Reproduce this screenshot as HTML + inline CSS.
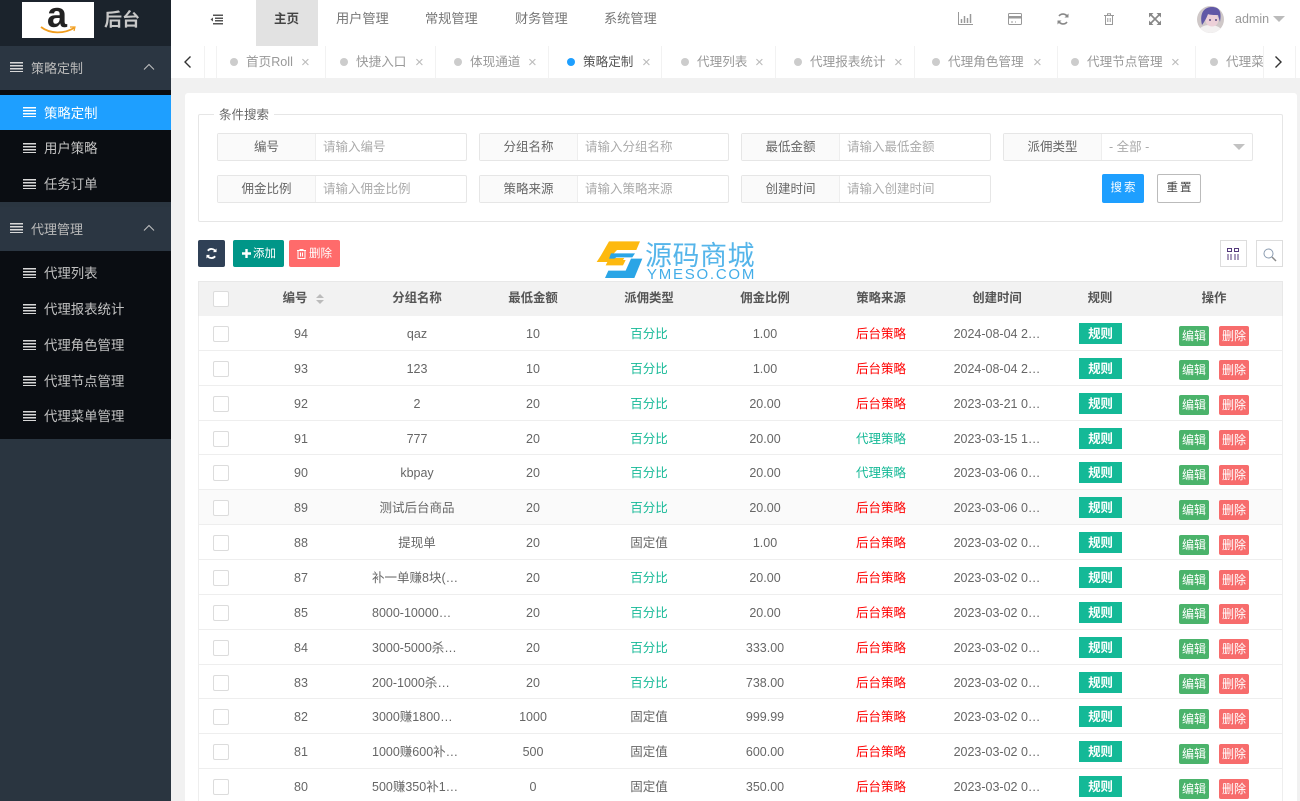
<!DOCTYPE html>
<html lang="zh-CN"><head><meta charset="utf-8"><title>后台</title>
<style>
*{box-sizing:border-box}
html,body{margin:0;padding:0;width:1300px;height:801px;overflow:hidden;background:#f1f1f1;font-family:"Liberation Sans","Noto Sans CJK SC",sans-serif;font-size:12.5px;color:#666}
#wrap{position:relative;width:1300px;height:801px;overflow:hidden;background:#f1f1f1}
.a{position:absolute;white-space:nowrap}
#side{position:absolute;left:0;top:0;width:171px;height:801px;background:#2a3540;color:#c2c2c2}
.ms{position:absolute;height:36px;line-height:36px;left:44px;font-size:13.4px;color:#c2c2c2;white-space:nowrap}
.li{position:absolute;width:13px;height:10px;background:repeating-linear-gradient(#d8d8d8 0 1.5px,transparent 1.5px 3px)}
#top{position:absolute;left:171px;top:0;width:1129px;height:46px;background:#fff}
.nav{position:absolute;top:0;line-height:38px;font-size:13.2px;color:#777}
#tabs{position:absolute;left:171px;top:46px;width:1129px;height:32px;background:#fff;overflow:hidden}
.sep{position:absolute;top:0;width:1px;height:32px;background:#f2f2f2}
.dot{position:absolute;top:12px;width:8px;height:8px;border-radius:50%;background:#ccc}
.tt{position:absolute;top:0;line-height:32px;color:#999;font-size:12.6px;white-space:nowrap}
.tx{position:absolute;top:0;line-height:34px;color:#bbb;font-size:15px}
#card{position:absolute;left:185px;top:93px;width:1112px;height:720px;background:#fff;border-radius:3px}
#fs{position:absolute;left:198px;top:114px;width:1085px;height:108px;border:1px solid #e6e6e6;border-radius:2px}
.f{position:absolute;width:250px;height:28px;border:1px solid #e6e6e6;border-radius:2px;background:#fff}
.f b{position:absolute;left:0;top:0;width:98px;height:26px;background:#fafafa;border-right:1px solid #eee;font-weight:400;color:#666;text-align:center;line-height:26px;font-size:12.5px;white-space:nowrap}
.f i{position:absolute;left:105px;top:0;font-style:normal;line-height:26px;color:#aaa;font-size:12.5px;white-space:nowrap}
.btn{position:absolute;border-radius:2px;color:#fff;text-align:center;white-space:nowrap}
#thead{position:absolute;left:198px;top:281px;width:1085px;height:36px;background:#f2f2f2;border:1px solid #e8e8e8;border-bottom:1px solid #e6e6e6}
.h{position:absolute;top:281px;line-height:35px;font-weight:700;color:#555;text-align:center;font-size:12.4px}
.r{position:absolute;left:198px;width:1085px;height:34.86px;border-bottom:1.5px solid #eeeeee;border-left:1px solid #eee;border-right:1px solid #eee;background:#fff}
.c{position:absolute;top:1px;text-align:center;line-height:35px;white-space:nowrap;color:#666}
.c1{left:44px;width:116px}.c2{left:160px;width:116px}.c3{left:276px;width:116px}.c4{left:392px;width:116px}.c5{left:508px;width:116px}.c6{left:624px;width:116px}.c7{left:740px;width:116px}
.t{text-align:left;padding-left:13px}
.g{color:#16b997}.k{color:#666}.d{color:#f00}
.cb{position:absolute;left:14px;top:10px;width:16px;height:16px;border:1px solid #dcdcdc;border-radius:2px;background:#fff}
.ru{position:absolute;left:880px;top:7px;width:43px;height:21px;background:#14b997;color:#fff;font-weight:700;text-align:center;line-height:22px;font-size:12.4px}
.ed,.de{position:absolute;top:9.5px;width:30px;height:20px;border-radius:2px;color:#fff;text-align:center;line-height:20px;font-size:12px}
.ed{left:980px;background:#4bb36b}.de{left:1020px;background:#f76c6c}
</style></head><body><div id="wrap">
<div id="side">
<div class="a" style="left:0;top:0;width:171px;height:46px;background:#1b232c"></div>
<div class="a" style="left:22px;top:2px;width:72px;height:36px;background:#fff"></div>
<div class="a" style="left:47px;top:-4px;font:700 36px/38px 'Liberation Sans',sans-serif;color:#222">a</div>
<svg class="a" style="left:40px;top:24px" width="36" height="11" viewBox="0 0 36 11"><path d="M1 3C10 10 24 10 34 4" fill="none" stroke="#f19d1d" stroke-width="1.8"/><path d="M30 3l5 0-1 4" fill="none" stroke="#f19d1d" stroke-width="1.2"/></svg>
<div class="a" style="left:104px;top:7px;font-size:18px;line-height:26px;font-weight:700;color:#c8c8c8">后台</div>

<div class="a" style="left:0;top:46px;width:171px;height:44px;background:#2b3642"></div>
<div class="li" style="left:10px;top:62px"></div>
<div class="ms" style="left:31px;top:51px;font-size:13px;color:#bbb">策略定制</div>
<svg class="a" style="left:143px;top:63px" width="12" height="8" viewBox="0 0 12 8"><path d="M1 6.5l5-5 5 5" fill="none" stroke="#c2c2c2" stroke-width="1"/></svg>

<div class="a" style="left:0;top:90px;width:171px;height:112px;background:#0a0d12"></div>
<div class="a" style="left:0;top:95px;width:171px;height:35px;background:#1e9fff"></div>
<div class="li" style="left:23px;top:107px;background:repeating-linear-gradient(#fff 0 1.5px,transparent 1.5px 3px)"></div>
<div class="ms" style="top:96px;color:#fff">策略定制</div>
<div class="li" style="left:23px;top:143px"></div>
<div class="ms" style="top:131px">用户策略</div>
<div class="li" style="left:23px;top:179px"></div>
<div class="ms" style="top:167px">任务订单</div>

<div class="a" style="left:0;top:207px;width:171px;height:44px;background:#2b3642"></div>
<div class="li" style="left:10px;top:223px"></div>
<div class="ms" style="left:31px;top:212px;font-size:13px;color:#bbb">代理管理</div>
<svg class="a" style="left:143px;top:224px" width="12" height="8" viewBox="0 0 12 8"><path d="M1 6.5l5-5 5 5" fill="none" stroke="#c2c2c2" stroke-width="1"/></svg>

<div class="a" style="left:0;top:251px;width:171px;height:188px;background:#0a0d12"></div>
<div class="li" style="left:23px;top:268px"></div><div class="ms" style="top:256px">代理列表</div>
<div class="li" style="left:23px;top:304px"></div><div class="ms" style="top:292px">代理报表统计</div>
<div class="li" style="left:23px;top:340px"></div><div class="ms" style="top:328px">代理角色管理</div>
<div class="li" style="left:23px;top:376px"></div><div class="ms" style="top:364px">代理节点管理</div>
<div class="li" style="left:23px;top:411px"></div><div class="ms" style="top:399px">代理菜单管理</div>
</div>

<div id="top">
<svg class="a" style="left:39px;top:14px" width="13" height="11" viewBox="0 0 13 11"><path d="M3 1.200h10M5 4.200h8M5 6.800h8M3 9.800h10" stroke="#555" stroke-width="1.5"/><path d="M3 3.500L.5 5.500 3 7.500z" fill="#555"/></svg>
<div class="a" style="left:85px;top:0;width:62px;height:46px;background:#e2e2e2"></div>
<div class="nav" style="left:103px;color:#444;font-weight:700;font-size:12.5px">主页</div>
<div class="nav" style="left:165px">用户管理</div>
<div class="nav" style="left:254px">常规管理</div>
<div class="nav" style="left:344px">财务管理</div>
<div class="nav" style="left:433px">系统管理</div>
<svg class="a" style="left:787px;top:12px" width="15" height="13" viewBox="0 0 15 13"><path d="M.5 0v12.500H15" fill="none" stroke="#999"/><path d="M3.500 7v4M6.500 4v7M9.500 6v5M12.500 2v9" stroke="#999" stroke-width="1.500"/></svg>
<svg class="a" style="left:837px;top:13px" width="14" height="12" viewBox="0 0 14 12"><rect x=".5" y=".5" width="13" height="11" rx="1" fill="none" stroke="#999"/><rect x="1" y="3" width="12" height="2.500" fill="#999"/><path d="M3 9h2M7 9h1" stroke="#999"/></svg>
<svg class="a" style="left:886px;top:13px" width="12" height="12" viewBox="0 0 12 12"><path d="M10.500 4A5 5 0 0 0 2 3M1.500 8A5 5 0 0 0 10 9" fill="none" stroke="#888" stroke-width="1.600"/><path d="M11.500 .5v4h-4zM.5 11.500v-4h4z" fill="#888"/></svg>
<svg class="a" style="left:933px;top:13px" width="10" height="12" viewBox="0 0 10 12"><path d="M0 2.500h10M3.500 2.500V.8h3v1.700M1.500 2.500v9h7v-9M3.800 5v4M6.200 5v4" fill="none" stroke="#999"/></svg>
<svg class="a" style="left:978px;top:13px" width="12" height="12" viewBox="0 0 12 12"><path d="M2 2l8 8M10 2l-8 8" stroke="#888" stroke-width="1.600"/><path d="M0 0h4.500L0 4.500zM12 0v4.500L7.500 0zM0 12V7.500L4.500 12zM12 12H7.500L12 7.500z" fill="#888"/></svg>
<svg class="a" style="left:1026px;top:6px" width="27" height="27" viewBox="0 0 27 27"><defs><clipPath id="av"><circle cx="13.500" cy="13.500" r="13.500"/></clipPath></defs><g clip-path="url(#av)"><rect width="27" height="27" fill="#cfc8c8"/><path d="M0 27c2-6 7-8 13-8s11 2 14 8z" fill="#f3f1f1"/><ellipse cx="15" cy="14" rx="6.500" ry="6.500" fill="#ecd0d8"/><path d="M5 19C2 6 8 1 15 1s10 4 8 15l-2-7c-4 0-8 0-10-1-1 3-3 7-6 11z" fill="#6158a6"/><path d="M12 14h2M18 14h2" stroke="#5a4a80" stroke-width="1.500"/></g></svg>
<div class="a" style="left:1064px;top:0;line-height:38px;color:#999;font-size:12.5px">admin</div>
<div class="a" style="left:1102px;top:16px;width:0;height:0;border:6px solid transparent;border-top:6px solid #bbb;border-bottom:0"></div>
</div>

<div id="tabs">
<svg class="a" style="left:12px;top:9px" width="9" height="14" viewBox="0 0 9 14"><path d="M7.500 1.500L2 7l5.500 5.500" fill="none" stroke="#333" stroke-width="1.400"/></svg>
<div class="sep" style="left:33px"></div><div class="sep" style="left:45px"></div>
<div class="dot" style="left:59px"></div><div class="tt" style="left:75px">首页Roll</div><div class="tx" style="left:130px">×</div><div class="sep" style="left:154px"></div>
<div class="dot" style="left:169px"></div><div class="tt" style="left:185px">快捷入口</div><div class="tx" style="left:244px">×</div><div class="sep" style="left:264px"></div>
<div class="dot" style="left:283px"></div><div class="tt" style="left:299px">体现通道</div><div class="tx" style="left:357px">×</div><div class="sep" style="left:377px"></div>
<div class="dot" style="left:396px;background:#1e9fff"></div><div class="tt" style="left:412px;color:#555">策略定制</div><div class="tx" style="left:471px">×</div><div class="sep" style="left:490px"></div>
<div class="dot" style="left:510px"></div><div class="tt" style="left:526px">代理列表</div><div class="tx" style="left:584px">×</div><div class="sep" style="left:604px"></div>
<div class="dot" style="left:623px"></div><div class="tt" style="left:639px">代理报表统计</div><div class="tx" style="left:723px">×</div><div class="sep" style="left:743px"></div>
<div class="dot" style="left:761px"></div><div class="tt" style="left:777px">代理角色管理</div><div class="tx" style="left:862px">×</div><div class="sep" style="left:886px"></div>
<div class="dot" style="left:900px"></div><div class="tt" style="left:916px">代理节点管理</div><div class="tx" style="left:1000px">×</div><div class="sep" style="left:1024px"></div>
<div class="dot" style="left:1039px"></div><div class="tt" style="left:1055px">代理菜单管理</div>
<div class="a" style="left:1092px;top:0;width:37px;height:32px;background:#fff;border-left:1px solid #f2f2f2"></div>
<svg class="a" style="left:1103px;top:9px" width="9" height="14" viewBox="0 0 9 14"><path d="M1.500 1.500L7 7l-5.500 5.500" fill="none" stroke="#333" stroke-width="1.400"/></svg>
<div class="sep" style="left:1124px"></div>
</div>

<div id="card"></div>
<div id="fs"></div>
<div class="a" style="left:214px;top:107px;padding:0 5px;background:#fff;color:#666;line-height:17px;font-size:12.5px">条件搜索</div>

<div class="f" style="left:217px;top:133px"><b>编号</b><i>请输入编号</i></div>
<div class="f" style="left:479px;top:133px"><b>分组名称</b><i>请输入分组名称</i></div>
<div class="f" style="left:741px;top:133px"><b>最低金额</b><i>请输入最低金额</i></div>
<div class="f" style="left:1003px;top:133px"><b>派佣类型</b><i>- 全部 -</i><span class="a" style="left:229px;top:10px;width:0;height:0;border:6px solid transparent;border-top:6px solid #c2c2c2;border-bottom:0"></span></div>
<div class="f" style="left:217px;top:175px"><b>佣金比例</b><i>请输入佣金比例</i></div>
<div class="f" style="left:479px;top:175px"><b>策略来源</b><i>请输入策略来源</i></div>
<div class="f" style="left:741px;top:175px"><b>创建时间</b><i>请输入创建时间</i></div>
<div class="btn" style="left:1102px;top:174px;width:42px;height:29px;background:#1e9fff;line-height:29px;letter-spacing:2px;text-indent:2px;font-size:11.5px">搜索</div>
<div class="btn" style="left:1157px;top:174px;width:44px;height:29px;background:#fff;border:1px solid #bbb;color:#444;line-height:27px;letter-spacing:2px;text-indent:2px;font-size:11.5px">重置</div>

<div class="btn" style="left:198px;top:240px;width:27px;height:27px;background:#2f4056">
<svg style="position:absolute;left:8px;top:8px" width="11" height="11" viewBox="0 0 12 12"><path d="M10.500 4A5 5 0 0 0 2 3M1.500 8A5 5 0 0 0 10 9" fill="none" stroke="#fff" stroke-width="2"/><path d="M11.500 .5v4h-4zM.5 11.500v-4h4z" fill="#fff"/></svg></div>
<div class="btn" style="left:233px;top:240px;width:51px;height:27px;background:#009688;line-height:28px;font-size:11.500px">
<svg style="position:absolute;left:9px;top:9px" width="9" height="9" viewBox="0 0 9 9"><path d="M4.500 0v9M0 4.500h9" stroke="#fff" stroke-width="2.400"/></svg><span style="position:absolute;left:20px;top:0">添加</span></div>
<div class="btn" style="left:289px;top:240px;width:51px;height:27px;background:#ff6b6b;line-height:28px;font-size:11.500px">
<svg style="position:absolute;left:8px;top:9px" width="9" height="10" viewBox="0 0 9 10"><path d="M0 1.500h9M3 1.500V.5h3v1M1 1.500v8h7v-8M3.500 3.500v4M5.500 3.500v4" fill="none" stroke="#fff" stroke-width="1"/></svg><span style="position:absolute;left:20px;top:0">删除</span></div>

<svg class="a" style="left:595px;top:238px" width="60" height="48" viewBox="0 0 180 144"><path d="M42 10H135L124 36H66L44 60H88L80 72H5L18 52z" fill="#fdb90f"/><path d="M48 46H120L112 58H64L58 62H42z" fill="#2aa5e6"/><path d="M40 66H92L84 82H32z" fill="#fdb90f"/><path d="M108 62H142L118 120H30L40 98H92z" fill="#2aa5e6"/></svg>
<div class="a" style="left:645px;top:240px;font-size:27px;line-height:32px;letter-spacing:.5px;color:#55b5ea">源码商城</div>
<div class="a" style="left:647px;top:267px;font-size:15px;line-height:15px;letter-spacing:1.750px;color:#43ade8;z-index:2">YMESO.COM</div>

<div class="a" style="left:1220px;top:240px;width:27px;height:27px;border:1px solid #ddd;background:#fff">
<svg style="position:absolute;left:6px;top:7px" width="13" height="12" viewBox="0 0 13 12"><path d="M.5.5h4v3h-4zM7.500.5h4v3h-4zM1 6v6M4 6v6M8 6v6M11 6v6" fill="none" stroke="#553a7c"/></svg></div>
<div class="a" style="left:1256px;top:240px;width:27px;height:27px;border:1px solid #ddd;background:#fff">
<svg style="position:absolute;left:6px;top:7px" width="14" height="14" viewBox="0 0 14 14"><circle cx="5.500" cy="5.500" r="4.500" fill="none" stroke="#8a9bb0"/><path d="M9 9l4 4" stroke="#8a8a8a" stroke-width="1.500"/></svg></div>

<div id="thead"><div class="cb" style="left:14px;top:9px"></div></div>
<div class="h" style="left:243px;width:104px">编号</div>
<div class="a" style="left:316px;top:294px;width:0;height:0;border:4.500px solid transparent;border-bottom:4.500px solid #bbb;border-top:0"></div>
<div class="a" style="left:316px;top:300px;width:0;height:0;border:4.500px solid transparent;border-top:4.500px solid #bbb;border-bottom:0"></div>
<div class="h" style="left:359px;width:116px">分组名称</div>
<div class="h" style="left:475px;width:116px">最低金额</div>
<div class="h" style="left:591px;width:116px">派佣类型</div>
<div class="h" style="left:707px;width:116px">佣金比例</div>
<div class="h" style="left:823px;width:116px">策略来源</div>
<div class="h" style="left:939px;width:116px">创建时间</div>
<div class="h" style="left:1055px;width:90px">规则</div>
<div class="h" style="left:1145px;width:138px">操作</div>

<div class="r" style="top:316.000px"><div class="cb"></div><div class="c c1">94</div><div class="c c2">qaz</div><div class="c c3">10</div><div class="c c4 g">百分比</div><div class="c c5">1.00</div><div class="c c6 d">后台策略</div><div class="c c7">2024-08-04 2…</div><div class="ru">规则</div><div class="ed">编辑</div><div class="de">删除</div></div>
<div class="r" style="top:350.860px"><div class="cb"></div><div class="c c1">93</div><div class="c c2">123</div><div class="c c3">10</div><div class="c c4 g">百分比</div><div class="c c5">1.00</div><div class="c c6 d">后台策略</div><div class="c c7">2024-08-04 2…</div><div class="ru">规则</div><div class="ed">编辑</div><div class="de">删除</div></div>
<div class="r" style="top:385.720px"><div class="cb"></div><div class="c c1">92</div><div class="c c2">2</div><div class="c c3">20</div><div class="c c4 g">百分比</div><div class="c c5">20.00</div><div class="c c6 d">后台策略</div><div class="c c7">2023-03-21 0…</div><div class="ru">规则</div><div class="ed">编辑</div><div class="de">删除</div></div>
<div class="r" style="top:420.580px"><div class="cb"></div><div class="c c1">91</div><div class="c c2">777</div><div class="c c3">20</div><div class="c c4 g">百分比</div><div class="c c5">20.00</div><div class="c c6 g">代理策略</div><div class="c c7">2023-03-15 1…</div><div class="ru">规则</div><div class="ed">编辑</div><div class="de">删除</div></div>
<div class="r" style="top:455.440px"><div class="cb"></div><div class="c c1">90</div><div class="c c2">kbpay</div><div class="c c3">20</div><div class="c c4 g">百分比</div><div class="c c5">20.00</div><div class="c c6 g">代理策略</div><div class="c c7">2023-03-06 0…</div><div class="ru">规则</div><div class="ed">编辑</div><div class="de">删除</div></div>
<div class="r" style="top:490.300px;background:#fafafa"><div class="cb"></div><div class="c c1">89</div><div class="c c2">测试后台商品</div><div class="c c3">20</div><div class="c c4 g">百分比</div><div class="c c5">20.00</div><div class="c c6 d">后台策略</div><div class="c c7">2023-03-06 0…</div><div class="ru">规则</div><div class="ed">编辑</div><div class="de">删除</div></div>
<div class="r" style="top:525.160px"><div class="cb"></div><div class="c c1">88</div><div class="c c2">提现单</div><div class="c c3">20</div><div class="c c4 k">固定值</div><div class="c c5">1.00</div><div class="c c6 d">后台策略</div><div class="c c7">2023-03-02 0…</div><div class="ru">规则</div><div class="ed">编辑</div><div class="de">删除</div></div>
<div class="r" style="top:560.020px"><div class="cb"></div><div class="c c1">87</div><div class="c c2 t">补一单赚8块(…</div><div class="c c3">20</div><div class="c c4 g">百分比</div><div class="c c5">20.00</div><div class="c c6 d">后台策略</div><div class="c c7">2023-03-02 0…</div><div class="ru">规则</div><div class="ed">编辑</div><div class="de">删除</div></div>
<div class="r" style="top:594.880px"><div class="cb"></div><div class="c c1">85</div><div class="c c2 t">8000-10000…</div><div class="c c3">20</div><div class="c c4 g">百分比</div><div class="c c5">20.00</div><div class="c c6 d">后台策略</div><div class="c c7">2023-03-02 0…</div><div class="ru">规则</div><div class="ed">编辑</div><div class="de">删除</div></div>
<div class="r" style="top:629.740px"><div class="cb"></div><div class="c c1">84</div><div class="c c2 t">3000-5000杀…</div><div class="c c3">20</div><div class="c c4 g">百分比</div><div class="c c5">333.00</div><div class="c c6 d">后台策略</div><div class="c c7">2023-03-02 0…</div><div class="ru">规则</div><div class="ed">编辑</div><div class="de">删除</div></div>
<div class="r" style="top:664.600px"><div class="cb"></div><div class="c c1">83</div><div class="c c2 t">200-1000杀…</div><div class="c c3">20</div><div class="c c4 g">百分比</div><div class="c c5">738.00</div><div class="c c6 d">后台策略</div><div class="c c7">2023-03-02 0…</div><div class="ru">规则</div><div class="ed">编辑</div><div class="de">删除</div></div>
<div class="r" style="top:699.460px"><div class="cb"></div><div class="c c1">82</div><div class="c c2 t">3000赚1800…</div><div class="c c3">1000</div><div class="c c4 k">固定值</div><div class="c c5">999.99</div><div class="c c6 d">后台策略</div><div class="c c7">2023-03-02 0…</div><div class="ru">规则</div><div class="ed">编辑</div><div class="de">删除</div></div>
<div class="r" style="top:734.320px"><div class="cb"></div><div class="c c1">81</div><div class="c c2 t">1000赚600补…</div><div class="c c3">500</div><div class="c c4 k">固定值</div><div class="c c5">600.00</div><div class="c c6 d">后台策略</div><div class="c c7">2023-03-02 0…</div><div class="ru">规则</div><div class="ed">编辑</div><div class="de">删除</div></div>
<div class="r" style="top:769.180px"><div class="cb"></div><div class="c c1">80</div><div class="c c2 t">500赚350补1…</div><div class="c c3">0</div><div class="c c4 k">固定值</div><div class="c c5">350.00</div><div class="c c6 d">后台策略</div><div class="c c7">2023-03-02 0…</div><div class="ru">规则</div><div class="ed">编辑</div><div class="de">删除</div></div>
</div></body></html>
